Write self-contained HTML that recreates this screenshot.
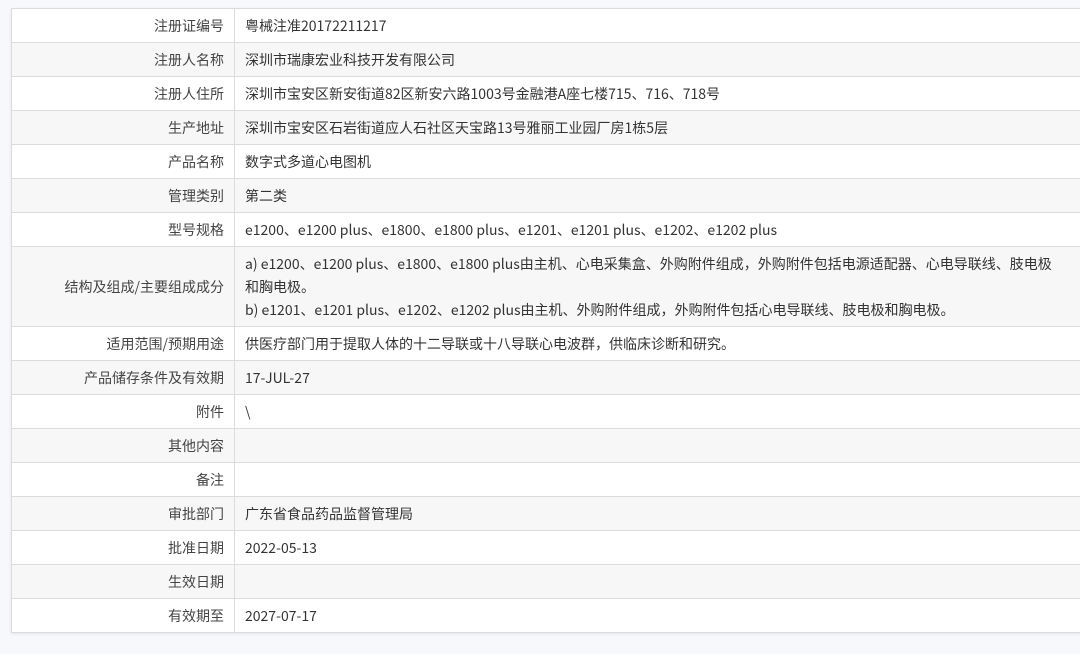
<!DOCTYPE html><html><head><meta charset="utf-8"><style>
body{margin:0;background:#f6f8fb;width:1080px;height:654px;overflow:hidden;font-family:"Noto Sans CJK SC","Liberation Sans",sans-serif;font-size:14px;color:#333}
table{position:absolute;left:11px;top:8px;width:1080px;border-collapse:collapse;background:#fff;box-shadow:0 1px 3px rgba(0,0,0,.08)}
td{border:1px solid #dcdcdc;height:34px;padding:2px 10px 0;line-height:23px;box-sizing:border-box}
td:first-child{width:223px;text-align:right;color:#444}
tr:nth-child(even){background:#f7f7f7}
</style></head><body><table>
<tr><td>注册证编号</td><td>粤械注准20172211217</td></tr>
<tr><td>注册人名称</td><td>深圳市瑞康宏业科技开发有限公司</td></tr>
<tr><td>注册人住所</td><td>深圳市宝安区新安街道82区新安六路1003号金融港A座七楼715、716、718号</td></tr>
<tr><td>生产地址</td><td>深圳市宝安区石岩街道应人石社区天宝路13号雅丽工业园厂房1栋5层</td></tr>
<tr><td>产品名称</td><td>数字式多道心电图机</td></tr>
<tr><td>管理类别</td><td>第二类</td></tr>
<tr><td>型号规格</td><td>e1200、e1200 plus、e1800、e1800 plus、e1201、e1201 plus、e1202、e1202 plus</td></tr>
<tr><td style="height:80px">结构及组成/主要组成成分</td><td>a) e1200、e1200 plus、e1800、e1800 plus由主机、心电采集盒、外购附件组成，外购附件包括电源适配器、心电导联线、肢电极<br>和胸电极。<br>b) e1201、e1201 plus、e1202、e1202 plus由主机、外购附件组成，外购附件包括心电导联线、肢电极和胸电极。</td></tr>
<tr><td>适用范围/预期用途</td><td>供医疗部门用于提取人体的十二导联或十八导联心电波群，供临床诊断和研究。</td></tr>
<tr><td>产品储存条件及有效期</td><td>17-JUL-27</td></tr>
<tr><td>附件</td><td>\</td></tr>
<tr><td>其他内容</td><td></td></tr>
<tr><td>备注</td><td></td></tr>
<tr><td>审批部门</td><td>广东省食品药品监督管理局</td></tr>
<tr><td>批准日期</td><td>2022-05-13</td></tr>
<tr><td>生效日期</td><td></td></tr>
<tr><td>有效期至</td><td>2027-07-17</td></tr>
</table></body></html>
